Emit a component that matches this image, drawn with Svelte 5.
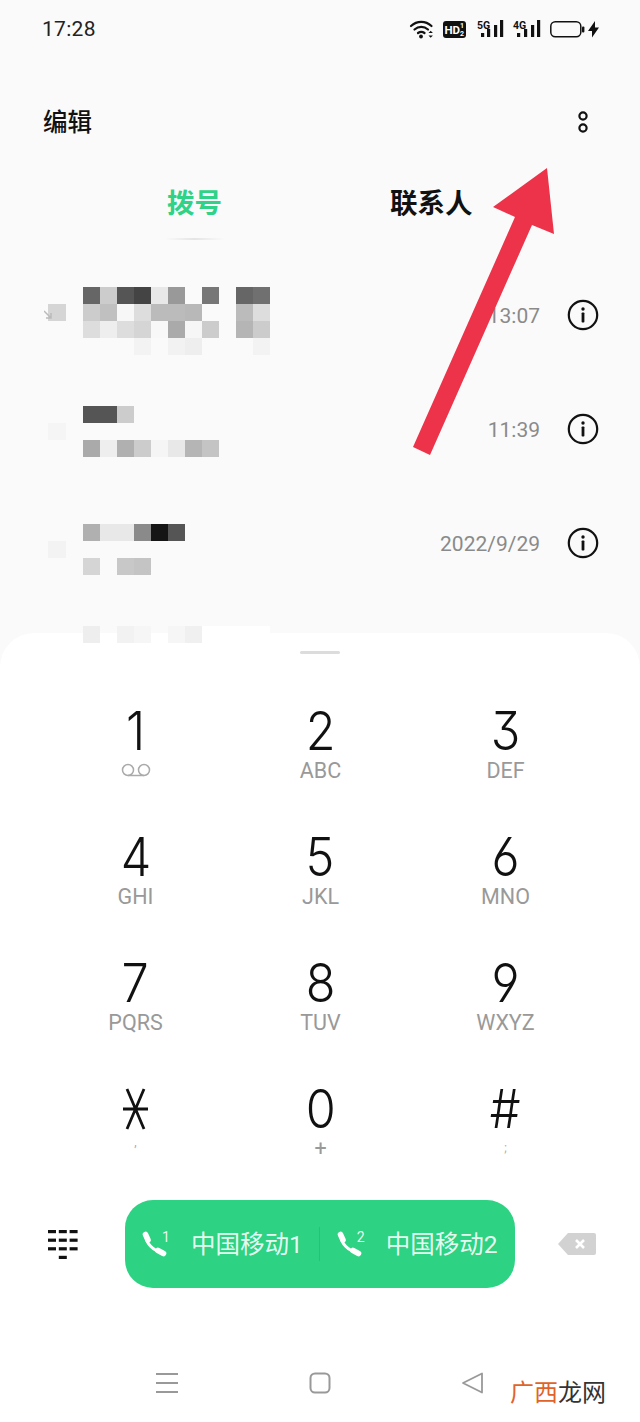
<script>
  const _ = '';
  const calls = [
    { time: '13:07', left: '#d5d5d5', tick: true, pad: 28, rows: [
      ['#666', '#ccc', '#555', '#444', '#e8e8e8', '#999', _, '#777', _, '#666', '#707070'],
      ['#ccc', '#c0c0c0', '#f7f7f7', '#ddd', '#bbb', '#bbb', '#b8b8b8', _, _, '#bbb', '#ddd'],
      ['#ddd', '#eee', '#ddd', '#d5d5d5', '#f8f8f8', '#aaa', '#f6f6f6', '#ccc', _, '#b5b5b5', '#ccc'],
      [_, _, _, '#f3f3f3', _, '#f2f2f2', '#eee', _, _, _, '#f3f3f3']
    ]},
    { time: '11:39', left: '#f5f5f5', pad: 33, rows: [
      ['#555', '#555', '#ccc'],
      [],
      ['#aaa', '#eee', '#b0b0b0', '#ccc', '#f5f5f5', '#e8e8e8', '#b5b5b5', '#c4c4c4']
    ]},
    { time: '2022/9/29', left: '#f3f3f3', pad: 37, rows: [
      ['#b0b0b0', '#e8e8e8', '#e8e8e8', '#8a8a8a', '#151515', '#555'],
      [],
      ['#d5d5d5', _, '#c8c8c8', '#c4c4c4']
    ]},
    { time: '', left: _, pad: 25, rows: [
      ['#eee', _, '#f2f2f2', '#f6f6f6', _, '#f6f6f6', '#f0f0f0', '#fff', '#fff', '#fff', '#fff']
    ]}
  ];
  const keys = [
    ['1', ''], ['2', 'ABC'], ['3', 'DEF'],
    ['4', 'GHI'], ['5', 'JKL'], ['6', 'MNO'],
    ['7', 'PQRS'], ['8', 'TUV'], ['9', 'WXYZ'],
    ['*', ','], ['0', '+'], ['#', ';']
  ];
  const sims = [['1', '中国移动1'], ['2', '中国移动2']];
  const dots = [0, 1, 2];
  const bars = [[71, 16], [77, 12], [84, 8], [90, 3]];
  const bars2 = [[107, 16], [114, 12], [121, 8], [127, 3]];
</script>

<div class="page">
  <header class="status">
    <span class="clock">17:28</span>
    <svg class="status-icons" width="190" height="24" viewBox="0 0 190 24">
      <g fill="none" stroke="#111" stroke-width="2.200" stroke-linecap="round">
        <path d="M1 9c6-5.500 14.500-5.500 20.500 0"/><path d="M4.500 12.500c4-3.500 9.500-3.500 13.500 0"/><path d="M8 16c2-1.500 4.500-1.500 6.500 0"/>
      </g>
      <circle cx="11" cy="19.500" r="1.900" fill="#111"/>
      <path d="M18.500 16l2.200-2.200 2.200 2.200zM18.500 18.500l2.200 2.200 2.200-2.200z" fill="#111"/>
      <rect x="33" y="4" width="23" height="17" rx="3" fill="#111"/>
      <text x="34.500" y="17" class="hd">HD</text>
      <text x="50" y="10.500" class="hd-small">1</text>
      <text x="50" y="19" class="hd-small">2</text>
      <text x="67" y="12" class="net">5G</text>
      <text x="103" y="12" class="net">4G</text>
      <g fill="#111">
        {#each bars as [x, y]}<rect {x} {y} width="3.200" height={20 - y}/>{/each}
        {#each bars2 as [x, y]}<rect {x} {y} width="3.200" height={20 - y}/>{/each}
      </g>
      <rect x="140.800" y="4.800" width="30" height="15" rx="4.500" fill="none" stroke="#111" stroke-width="1.500"/>
      <rect x="172" y="9.500" width="2.400" height="6" rx="1" fill="#111"/>
      <path d="M185 4l-7 10h4v6.500l7-10h-4z" fill="#111"/>
    </svg>
  </header>

  <div class="toolbar">
    <span class="edit">编辑</span>
    <svg width="14" height="28" viewBox="0 0 14 28" class="more">
      <circle cx="7" cy="8" r="3.600" fill="none" stroke="#111" stroke-width="2.200"/>
      <circle cx="7" cy="20" r="3.600" fill="none" stroke="#111" stroke-width="2.200"/>
    </svg>
  </div>

  <nav class="tabs">
    <span class="tab active">拨号</span>
    <span class="tab">联系人</span>
  </nav>

  <section class="list">
    {#each calls as call}
      <div class="row">
        <div class="mosaic" style="margin-top:{call.pad}px">
          {#each call.rows as cells, r}
            <i class="cell" style="background:{r === 1 ? call.left : 'transparent'}">
              {#if r === 1 && call.tick}<svg class="tick" width="10" height="12" viewBox="0 0 10 12"><path d="M0 3l7 7M7 5v5H2" fill="none" stroke="#bbb" stroke-width="1.500"/></svg>{/if}
            </i>
            <i class="cell"></i>
            {#each Array(11) as _x, c}
              <i class="cell" style="background:{cells[c] || 'transparent'}"></i>
            {/each}
          {/each}
        </div>
        {#if call.time}
          <span class="time">{call.time}</span>
          <svg class="info" width="32" height="32" viewBox="0 0 32 32">
            <circle cx="16" cy="16" r="14.200" fill="none" stroke="#111" stroke-width="2.200"/>
            <circle cx="16" cy="10" r="1.700" fill="#111"/>
            <rect x="14.600" y="13.500" width="2.800" height="10" rx="0.800" fill="#111"/>
          </svg>
        {/if}
      </div>
    {/each}
  </section>

  <section class="sheet">
    <div class="handle"></div>
    <div class="keypad">
      {#each keys as [digit, sub]}
        <div class="key">
          {#if digit === '*'}
            <svg class="star" width="27" height="42" viewBox="0 0 27 42" role="img" aria-label="*">
              <path d="M5 1l17 40M22 1L5 41M1 21h25" fill="none" stroke="#111" stroke-width="2.800"/>
            </svg>
          {:else}
            <span class="digit">{digit}</span>
          {/if}
          {#if digit === '1'}
            <svg class="voicemail" width="32" height="14" viewBox="0 0 32 14">
              <g fill="none" stroke="#aaa" stroke-width="1.500">
                <circle cx="8" cy="7" r="5.500"/><circle cx="24" cy="7" r="5.500"/><path d="M8 12.500h16"/>
              </g>
            </svg>
          {:else}
            <span class="sub" class:comma={sub === ','} class:semi={sub === ';'}>{sub}</span>
          {/if}
        </div>
      {/each}
    </div>

    <div class="actions">
      <svg class="dialpad" width="30" height="30" viewBox="0 0 30 30" fill="#111">
        {#each dots as y}
          {#each dots as x}
            <rect x={x * 10.800} y={y * 8.600} width="8" height="3.200"/>
          {/each}
        {/each}
        <rect x="10.800" y="25.800" width="8" height="3.200"/>
      </svg>
      <div class="call">
        {#each sims as [n, name], i}
          {#if i}<span class="divider"></span>{/if}
          <div class="sim">
            <span class="phone">
              <svg width="28" height="28" viewBox="0 0 28 28">
                <g fill="none" stroke="#fff" stroke-linecap="round">
                  <path d="M5 6c0 7 7 15 16 16" stroke-width="3"/>
                  <path d="M4.500 4.500l2.500 5.500M17 20.500l5.500 3" stroke-width="5.600"/>
                </g>
              </svg>
              <sup>{n}</sup>
            </span>
            <span class="carrier">{name}</span>
          </div>
        {/each}
      </div>
      <svg class="backspace" width="40" height="24" viewBox="0 0 40 24">
        <path d="M11 1h26a2 2 0 0 1 2 2v18a2 2 0 0 1-2 2H11L1 12z" fill="#d2d2d2"/>
        <path d="M19 8l8 8M27 8l-8 8" stroke="#fff" stroke-width="2.600"/>
      </svg>
    </div>

    <footer class="nav">
      <svg width="24" height="22" viewBox="0 0 24 22"><path d="M1 2h22M1 11h22M1 20h22" stroke="#999" stroke-width="2"/></svg>
      <svg width="24" height="24" viewBox="0 0 24 24"><rect x="2.500" y="2.500" width="19" height="19" rx="4.500" fill="none" stroke="#999" stroke-width="2"/></svg>
      <svg width="24" height="24" viewBox="0 0 24 24"><path d="M21 2.500v19L2 12z" fill="none" stroke="#999" stroke-width="1.800" stroke-linejoin="round"/></svg>
    </footer>
  </section>

  <svg class="arrow" width="640" height="480" viewBox="0 0 640 480">
    <path d="M547 168L493 207L515 217L413 447L430 455L532 225L554 234z" fill="#ec3349"/>
  </svg>
  <div class="mark"><b>广西</b>龙网</div>
</div>

<style>
  :global(body) { margin: 0; }
  .page {
    position: relative;
    width: 640px;
    height: 1422px;
    overflow: hidden;
    background: #fafafa;
    font-family: Roboto, "Noto Sans CJK SC", sans-serif;
    color: #111;
  }
  .status {
    height: 58px;
    display: flex;
    justify-content: space-between;
    align-items: center;
    padding: 0 40px 0 42px;
    box-sizing: border-box;
  }
  .clock { font-size: 21px; color: #222; letter-spacing: .3px; }
  .status-icons { overflow: visible; }
  .hd { font: 700 11.500px Roboto, sans-serif; fill: #fff; }
  .hd-small { font: 700 7px Roboto, sans-serif; fill: #fff; }
  .net { font: 700 10.500px Roboto, sans-serif; fill: #111; }
  .toolbar {
    height: 70px;
    margin-top: 29px;
    display: flex;
    justify-content: space-between;
    align-items: center;
    padding: 0 50px 0 43px;
    box-sizing: border-box;
  }
  .edit { font-size: 24.500px; font-weight: 500; margin-top: -4px; }
  .tabs { height: 102px; position: relative; }
  .tab {
    position: absolute;
    top: 27px;
    font-size: 27.500px;
    line-height: 40px;
    font-weight: 700;
    left: 390px;
    white-space: nowrap;
  }
  .tab.active {
    left: 167px;
    color: #2fd286;
    height: 56px;
  }
  .tab.active::after {
    content: '';
    position: absolute;
    left: -2px;
    right: -2px;
    bottom: 0;
    height: 2px;
    background: linear-gradient(90deg, #fafafa, #e4e4e4, #fafafa);
  }
  .list { height: 374px; position: relative; z-index: 2; }
  .row {
    height: 114px;
    display: flex;
    align-items: flex-start;
    padding-left: 48px;
    position: relative;
  }
  .mosaic {
    display: grid;
    grid-template-columns: 18px repeat(12, 17px);
    grid-auto-rows: 17px;
  }
  .cell { display: block; position: relative; }
  .tick { position: absolute; left: -4px; top: 4px; }
  .time {
    position: absolute;
    right: 100px;
    top: 44px;
    font-size: 21px;
    line-height: 26px;
    color: #8a8a8a;
  }
  .info { position: absolute; left: 567px; top: 40px; }
  .sheet {
    background: #fff;
    border-radius: 34px 34px 0 0;
    height: 789px;
    position: relative;
  }
  .handle {
    position: absolute;
    left: 300px;
    top: 18px;
    width: 40px;
    height: 3px;
    border-radius: 2px;
    background: #dcdcdc;
  }
  .keypad {
    padding: 69px 50px 0 43px;
    display: grid;
    grid-template-columns: repeat(3, 185px);
    grid-auto-rows: 126px;
    justify-items: center;
    height: 504px;
  }
  .key { display: flex; flex-direction: column; align-items: center; width: 100%; }
  .digit {
    font-family: Inter, Roboto, sans-serif;
    font-feature-settings: "cv03", "cv04", "cv09";
    font-size: 54px;
    font-weight: 300;
    line-height: 50px;
    height: 50px;
    margin-top: 4px;
    color: #111;
    transform: scaleX(.9);
  }
  .star { margin-top: 8px; margin-bottom: 4px; }
  .sub {
    font-size: 21.500px;
    line-height: 24px;
    margin-top: 3px;
    color: #999;
  }
  .sub.comma { font-size: 12px; line-height: 16px; margin-top: 0; color: #aaa; }
  .sub.semi { font-size: 12px; line-height: 16px; margin-top: 6px; color: #aaa; }
  .voicemail { margin-top: 7px; }
  .actions {
    display: flex;
    align-items: center;
    height: 88px;
    padding-left: 48px;
    margin-top: -6px;
  }
  .dialpad { margin-right: 47px; margin-top: 1px; }
  .call {
    width: 390px;
    height: 88px;
    border-radius: 28px;
    background: #2dd283;
    display: flex;
    align-items: center;
    padding-left: 16px;
    box-sizing: border-box;
    color: rgba(255, 255, 255, .9);
  }
  .sim { display: flex; align-items: center; }
  .phone { position: relative; width: 50px; height: 28px; display: block; }
  .phone sup {
    position: absolute;
    left: 21px;
    top: -1px;
    font-size: 14px;
    line-height: 16px;
  }
  .carrier { font-size: 24.500px; line-height: 30px; white-space: nowrap; margin-top: 1px; }
  .divider {
    width: 1px;
    height: 34px;
    background: rgba(0, 0, 0, .08);
    margin: 0 16px 0 16px;
  }
  .backspace { margin-left: 42px; }
  .nav {
    position: absolute;
    left: 155px;
    top: 738px;
    width: 330px;
    display: flex;
    justify-content: space-between;
    align-items: center;
  }
  .arrow { position: absolute; left: 0; top: 0; z-index: 3; pointer-events: none; }
  .mark {
    position: absolute;
    left: 510px;
    top: 1376px;
    font-size: 24px;
    line-height: 34px;
    color: #333;
    z-index: 3;
  }
  .mark b { font-weight: 400; color: #e0642a; }
</style>
